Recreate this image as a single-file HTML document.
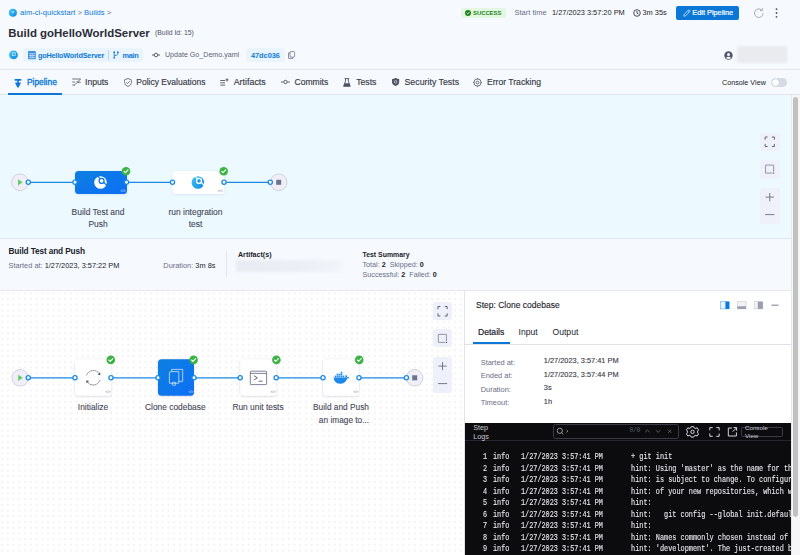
<!DOCTYPE html>
<html><head><meta charset="utf-8">
<style>
*{box-sizing:border-box;margin:0;padding:0}
html,body{width:800px;height:555px;overflow:hidden}
body{position:relative;background:#f6fafe;font-family:"Liberation Sans",sans-serif;color:#22222a}
.a{position:absolute;white-space:nowrap}
.t{position:absolute;white-space:nowrap;line-height:1}
svg{position:absolute;overflow:visible}
</style></head><body>

<!-- ===== HEADER ===== -->
<svg style="left:0;top:0" width="800" height="95">
  <defs>
    <linearGradient id="gb" x1="0" y1="0" x2="1" y2="1"><stop offset="0" stop-color="#45c8f5"/><stop offset="1" stop-color="#0a86e4"/></linearGradient>
  </defs>
  <circle cx="12.9" cy="12.85" r="4" fill="url(#gb)"/><path d="M12.1 11V12.6Q12.9 13.6 13.7 12.6V11" fill="none" stroke="#d6f1fc" stroke-width="0.7"/>
  <circle cx="13.5" cy="54.9" r="4.4" fill="url(#gb)"/><rect x="12.6" y="52.8" width="2.6" height="2.6" fill="none" stroke="#d6f1fc" stroke-width="0.7"/>
  <line x1="0" y1="69.5" x2="800" y2="69.5" stroke="#e3e3eb" stroke-width="1"/>
  <line x1="0" y1="94.5" x2="800" y2="94.5" stroke="#e3e3eb" stroke-width="1"/>
  <rect x="8" y="93" width="54" height="2" fill="#0b78d8"/>
</svg>

<div class="t" style="left:20px;top:9px;font-size:7.6px;color:#0b78d8">aim-ci-quickstart <span style="color:#6b6d85">&gt;</span> Builds <span style="color:#6b6d85">&gt;</span></div>
<div class="t" style="left:8.3px;top:27.8px;font-size:11.45px;font-weight:bold;color:#2c2d37">Build goHelloWorldServer</div>
<div class="t" style="left:155px;top:30px;font-size:6.85px;color:#4f5162">(Build Id: 15)</div>

<!-- row2 -->
<div class="a" style="left:23px;top:48px;width:119.5px;height:13.5px;border-radius:4px;background:#eaf4fd"></div>
<svg style="left:27.8px;top:50.5px" width="8" height="8.5" viewBox="0 0 8 8.5">
  <rect x="0" y="0" width="7.8" height="8.3" rx="1" fill="#3f8fdc"/>
  <path d="M0.8 2.6H7M0.8 4.5H7M0.8 6.4H7" stroke="#eaf4fd" stroke-width="0.55"/>
  <path d="M2.9 2.6V7.6M4.9 2.6V7.6" stroke="#eaf4fd" stroke-width="0.55"/>
</svg>
<div class="t" style="left:38px;top:52px;font-size:7.3px;font-weight:bold;color:#0b78d8;letter-spacing:-0.22px">goHelloWorldServer</div>
<div class="a" style="left:108.3px;top:50px;width:0.8px;height:9.5px;background:#b9d7f1"></div>
<svg style="left:112.6px;top:51px" width="6" height="8" viewBox="0 0 6 8">
  <circle cx="1.2" cy="1.2" r="0.85" fill="#0b78d8"/>
  <circle cx="1.2" cy="6.8" r="0.85" fill="#0b78d8"/>
  <circle cx="4.8" cy="1.2" r="0.85" fill="#0b78d8"/>
  <path d="M1.2 1.5V6.5M4.8 1.5V2.8Q4.8 4.4 1.2 4.9" fill="none" stroke="#0b78d8" stroke-width="0.8"/>
</svg>
<div class="t" style="left:122.5px;top:52px;font-size:7.3px;font-weight:bold;color:#0b78d8;letter-spacing:-0.25px">main</div>
<svg style="left:151px;top:50.8px" width="10" height="8" viewBox="0 0 10 8">
  <circle cx="5" cy="4" r="1.8" fill="none" stroke="#3c3d4a" stroke-width="0.8"/>
  <line x1="1" y1="4" x2="3.2" y2="4" stroke="#3c3d4a" stroke-width="0.8"/>
  <line x1="6.8" y1="4" x2="9" y2="4" stroke="#3c3d4a" stroke-width="0.8"/>
</svg>
<div class="t" style="left:165px;top:52px;font-size:7.1px;color:#5e6072">Update Go_Demo.yaml</div>
<div class="a" style="left:246px;top:48px;width:39px;height:13.5px;border-radius:4px;background:#eaf4fd"></div>
<div class="t" style="left:251px;top:52px;font-size:7.4px;font-weight:bold;color:#0b78d8;letter-spacing:-0.05px">47dc036</div>
<svg style="left:288.2px;top:51.2px" width="7" height="8" viewBox="0 0 7 8">
  <rect x="2" y="0.5" width="4.6" height="5.6" rx="0.9" fill="none" stroke="#6b6d85" stroke-width="0.75"/>
  <path d="M1.9 1.8H0.5V7.4H5V6.2" fill="none" stroke="#6b6d85" stroke-width="0.75"/>
</svg>

<!-- right header -->
<div class="a" style="left:461px;top:8px;width:45px;height:10px;border-radius:2px;background:#e4f7e1"></div>
<svg style="left:465px;top:10px" width="6" height="6" viewBox="0 0 6 6">
  <circle cx="3" cy="3" r="3" fill="#1b841d"/>
  <path d="M1.6 3.1L2.6 4L4.4 2.1" fill="none" stroke="#fff" stroke-width="0.8"/>
</svg>
<div class="t" style="left:473px;top:10.5px;font-size:5.95px;font-weight:bold;color:#1b841d;letter-spacing:-0.05px">SUCCESS</div>
<div class="t" style="left:514.5px;top:9px;font-size:7.5px;color:#6b6d85">Start time</div>
<div class="t" style="left:552px;top:9px;font-size:7.4px;color:#22222a">1/27/2023 3:57:20 PM</div>
<svg style="left:633px;top:8.5px" width="8" height="8" viewBox="0 0 8 8">
  <circle cx="4" cy="4" r="3.3" fill="none" stroke="#383946" stroke-width="0.9"/>
  <path d="M4 2V4.2L5.5 5" fill="none" stroke="#383946" stroke-width="0.9"/>
</svg>
<div class="t" style="left:642.5px;top:9px;font-size:7.4px;color:#22222a">3m 35s</div>
<div class="a" style="left:676px;top:6px;width:63px;height:13.5px;border-radius:2px;background:#0b78d8"></div>
<svg style="left:682.8px;top:8.8px" width="8" height="8" viewBox="0 0 8 8">
  <path d="M0.8 7.2L1.1 5.5L5.4 1.2Q6 0.6 6.6 1.2L6.8 1.4Q7.4 2 6.8 2.6L2.5 6.9Z M4.6 2L6 3.4" fill="none" stroke="#e6f1fc" stroke-width="0.75"/>
</svg>
<div class="t" style="left:692.3px;top:9.4px;font-size:7.35px;color:#fff;-webkit-text-stroke:0.2px #fff">Edit Pipeline</div>
<svg style="left:753.5px;top:7.5px" width="10" height="10" viewBox="0 0 10 10">
  <path d="M9.1 5.3A4.3 4.3 0 1 1 7.6 1.9" fill="none" stroke="#9fa1b3" stroke-width="0.9"/>
  <path d="M8.4 0.2V2.6H6" fill="none" stroke="#9fa1b3" stroke-width="0.9"/>
</svg>
<svg style="left:775px;top:7.5px" width="3" height="10" viewBox="0 0 3 10">
  <circle cx="1.5" cy="1.2" r="0.9" fill="#4f5162"/><circle cx="1.5" cy="5" r="0.9" fill="#4f5162"/><circle cx="1.5" cy="8.8" r="0.9" fill="#4f5162"/>
</svg>
<svg style="left:724px;top:50.7px" width="9" height="9" viewBox="0 0 9 9">
  <circle cx="4.5" cy="4.5" r="4.2" fill="#545668"/>
  <circle cx="4.5" cy="3.4" r="1.5" fill="#f6f9fd"/>
  <path d="M1.9 7.1Q4.5 4.2 7.1 7.1Q4.5 9 1.9 7.1Z" fill="#f6f9fd"/>
</svg>
<div class="a" style="left:737px;top:46px;width:50px;height:17px;background:#e9ebef;filter:blur(1px)"></div>

<!-- ===== TABS ===== -->
<svg style="left:13.5px;top:77.5px" width="8" height="10" viewBox="0 0 8 10">
  <rect x="0.4" y="0.9" width="7.2" height="1.8" rx="0.9" fill="#0b78d8"/>
  <rect x="3.2" y="0.9" width="1.6" height="8.6" fill="#0b78d8"/>
  <path d="M1.2 4.4H6.8Q7 6.8 4 7.2Q1 6.8 1.2 4.4Z" fill="#0b78d8"/>
  <circle cx="4" cy="7.3" r="1.6" fill="#0b78d8"/>
</svg>
<div class="t" style="left:27px;top:78.3px;font-size:8.4px;color:#0b78d8;-webkit-text-stroke:0.35px #0b78d8">Pipeline</div>

<svg style="left:71.5px;top:78px" width="9" height="8" viewBox="0 0 9 8">
  <path d="M0.3 1H8.7M0.3 4H3M0.3 7H2.5" stroke="#4f5162" stroke-width="0.8" fill="none"/>
  <path d="M2 7.5L8.5 1.2M4.8 3.2L6.8 5.2M6 4.2L8.7 4.2" stroke="#4f5162" stroke-width="0.8" fill="none"/>
</svg>
<div class="t" style="left:85px;top:78.3px;font-size:8.6px;color:#383946;-webkit-text-stroke:0.15px #383946">Inputs</div>

<svg style="left:123.5px;top:77.5px" width="8" height="9" viewBox="0 0 8 9">
  <path d="M4 0.5L7.4 1.8V4.6Q7.4 7.4 4 8.5Q0.6 7.4 0.6 4.6V1.8Z" fill="none" stroke="#5e6072" stroke-width="0.8"/>
  <path d="M2.4 4.4L3.6 5.5L5.8 3.1" fill="none" stroke="#5e6072" stroke-width="0.8"/>
</svg>
<div class="t" style="left:136.2px;top:78.3px;font-size:8.55px;color:#383946;-webkit-text-stroke:0.15px #383946">Policy Evaluations</div>

<svg style="left:219.5px;top:77.5px" width="9" height="8" viewBox="0 0 9 8">
  <path d="M0.3 2.5H5M0.3 4.8H5M0.3 7.1H5" stroke="#4f5162" stroke-width="0.9" fill="none"/>
  <path d="M7 0.3V3.5M5.4 1.9H8.6" stroke="#4f5162" stroke-width="0.9" fill="none"/>
</svg>
<div class="t" style="left:233.7px;top:78.3px;font-size:8.9px;color:#383946;-webkit-text-stroke:0.15px #383946">Artifacts</div>

<svg style="left:280.5px;top:79px" width="9" height="6" viewBox="0 0 9 6">
  <circle cx="4.5" cy="3" r="1.7" fill="none" stroke="#4f5162" stroke-width="0.9"/>
  <path d="M0 3H2.6M6.4 3H9" stroke="#4f5162" stroke-width="0.9"/>
</svg>
<div class="t" style="left:294.5px;top:78.3px;font-size:8.55px;color:#383946;-webkit-text-stroke:0.15px #383946">Commits</div>

<svg style="left:343.3px;top:77.8px" width="8" height="9" viewBox="0 0 8 9">
  <path d="M1.6 0.6H6.2M2.5 0.6V3.2L0.6 8.3H7.2L5.3 3.2V0.6" fill="none" stroke="#4f5162" stroke-width="0.9" stroke-linejoin="round"/>
  <path d="M1.6 5.2H6.2L7.2 8.3H0.6Z" fill="#4f5162"/>
</svg>
<div class="t" style="left:356.2px;top:78.3px;font-size:8.7px;color:#383946;-webkit-text-stroke:0.15px #383946">Tests</div>

<svg style="left:391.8px;top:78.2px" width="7.2" height="8" viewBox="0 0 7.2 8">
  <path d="M3.6 0L7.2 1.3V3.9Q7.2 6.7 3.6 8Q0 6.7 0 3.9V1.3Z" fill="#4f5162"/>
  <circle cx="3.6" cy="3.8" r="1.3" fill="none" stroke="#f6f9fd" stroke-width="0.6"/>
</svg>
<div class="t" style="left:404.5px;top:78.3px;font-size:8.8px;color:#383946;-webkit-text-stroke:0.15px #383946">Security Tests</div>

<svg style="left:473px;top:77.5px" width="9" height="9" viewBox="0 0 9 9">
  <circle cx="4.5" cy="4.5" r="3.6" fill="none" stroke="#4f5162" stroke-width="0.8"/>
  <circle cx="4.5" cy="4.5" r="1.4" fill="none" stroke="#4f5162" stroke-width="0.8"/>
  <path d="M4.5 0V1.2M4.5 7.8V9M0 4.5H1.2M7.8 4.5H9" stroke="#4f5162" stroke-width="0.8"/>
</svg>
<div class="t" style="left:487px;top:78.3px;font-size:8.6px;color:#383946;-webkit-text-stroke:0.15px #383946">Error Tracking</div>

<div class="t" style="left:722px;top:78.5px;font-size:7.2px;color:#22222a">Console View</div>
<div class="a" style="left:771px;top:78px;width:16px;height:9px;border-radius:5px;background:#d4dbe3"></div>
<div class="a" style="left:771.8px;top:78.8px;width:7.4px;height:7.4px;border-radius:50%;background:#fff;box-shadow:0 0 0.6px rgba(0,0,0,0.4)"></div>

<!-- ===== CANVAS ===== -->
<div class="a" style="left:0;top:95px;width:792px;height:143px;background:#ecf9ff"></div>
<div class="a" style="left:0;top:238px;width:792px;height:53px;background:#f6faff;border-top:1px solid #e1e5ec;border-bottom:1px solid #e6e6ee"></div>
<svg style="left:0;top:95px" width="792" height="143" viewBox="0 95 792 143">
  <defs>
    <linearGradient id="bl" x1="0" y1="0" x2="1" y2="1"><stop offset="0" stop-color="#0b7fe0"/><stop offset="1" stop-color="#0a6ff5"/></linearGradient>
    <filter id="sh" x="-20%" y="-20%" width="140%" height="160%"><feDropShadow dx="0" dy="0.6" stdDeviation="0.8" flood-color="#6080a0" flood-opacity="0.18"/></filter>
    <linearGradient id="gic" x1="0" y1="0" x2="1" y2="1"><stop offset="0" stop-color="#45c8f5"/><stop offset="1" stop-color="#0a86e4"/></linearGradient>
  </defs>
  <line x1="28" y1="182.3" x2="75" y2="182.3" stroke="#1a8ae6" stroke-width="1.3"/>
  <line x1="127" y1="182.3" x2="172.5" y2="182.3" stroke="#1a8ae6" stroke-width="1.3"/>
  <line x1="224" y1="182.3" x2="270" y2="182.3" stroke="#1a8ae6" stroke-width="1.3"/>
  <circle cx="20" cy="182.3" r="8.3" fill="#f0eff8" stroke="#c9c9da" stroke-width="0.8"/>
  <path d="M18 179.2L22.6 182.3L18 185.4Z" fill="#5fcd68"/>
  <circle cx="278.7" cy="182.3" r="8.3" fill="#f0eff8" stroke="#c9c9da" stroke-width="0.8"/>
  <rect x="276.2" y="179.8" width="5" height="5" fill="#6f7190"/>
  <rect x="75" y="171" width="52" height="23" rx="3.5" fill="url(#bl)" filter="url(#sh)"/>
  <rect x="172.5" y="171" width="51.5" height="23" rx="3.5" fill="#fff" filter="url(#sh)"/>
  <circle cx="28.3" cy="182.3" r="2.1" fill="#fff" stroke="#1a8ae6" stroke-width="1.3"/>
  <circle cx="75" cy="182.3" r="2.1" fill="#fff" stroke="#1a8ae6" stroke-width="1.3"/>
  <circle cx="126.5" cy="182.3" r="2.1" fill="#fff" stroke="#1a8ae6" stroke-width="1.3"/>
  <circle cx="172.5" cy="182.3" r="2.1" fill="#fff" stroke="#1a8ae6" stroke-width="1.3"/>
  <circle cx="224" cy="182.3" r="2.1" fill="#fff" stroke="#1a8ae6" stroke-width="1.3"/>
  <circle cx="270.3" cy="182.3" r="2.1" fill="#fff" stroke="#1a8ae6" stroke-width="1.3"/>
  <!-- stage icon 1 (white) -->
  <circle cx="100.5" cy="182.5" r="6.3" fill="#fff"/>
  <path d="M97.6 176.2L106.9 185.5" stroke="#0b7ae8" stroke-width="1.1"/>
  <circle cx="101.6" cy="180.9" r="2.45" fill="#fff" stroke="#0b7ae8" stroke-width="1.3"/>
  <!-- stage icon 2 (blue) -->
  <circle cx="197.9" cy="182.5" r="6.3" fill="url(#gic)"/>
  <path d="M195 176.2L204.3 185.5" stroke="#fff" stroke-width="1.1"/>
  <circle cx="199" cy="180.9" r="2.45" fill="#2a98e8" stroke="#fff" stroke-width="1.3"/>
  <!-- code marks -->
  <text x="120.6" y="191.6" font-size="3.4" fill="#e6f1fd" font-family="Liberation Sans">&lt;/&gt;</text>
  <text x="217.8" y="191.6" font-size="3.4" fill="#6b6d85" font-family="Liberation Sans">&lt;/&gt;</text>
  <!-- checks -->
  <circle cx="126" cy="171.2" r="4.3" fill="#3bb443"/>
  <path d="M124 171.3L125.4 172.6L128 169.9" fill="none" stroke="#fff" stroke-width="1.1" stroke-linecap="round" stroke-linejoin="round"/>
  <circle cx="223.7" cy="171.2" r="4.3" fill="#3bb443"/>
  <path d="M221.7 171.3L223.1 172.6L225.7 169.9" fill="none" stroke="#fff" stroke-width="1.1" stroke-linecap="round" stroke-linejoin="round"/>
</svg>
<div class="t" style="left:48px;top:205.5px;width:100px;text-align:center;font-size:8.45px;line-height:12.2px;color:#464858;-webkit-text-stroke:0.1px #464858;white-space:normal">Build Test and<br>Push</div>
<div class="t" style="left:145.5px;top:205.5px;width:100px;text-align:center;font-size:8.45px;line-height:12.2px;color:#464858;-webkit-text-stroke:0.1px #464858;white-space:normal">run integration<br>test</div>

<!-- canvas controls -->
<div class="a" style="left:760px;top:132.5px;width:19.5px;height:18.5px;border-radius:3px;background:#eef0fa"></div>
<div class="a" style="left:760px;top:160px;width:19.5px;height:18.5px;border-radius:3px;background:#eef0fa"></div>
<div class="a" style="left:760px;top:188px;width:19.5px;height:35.5px;border-radius:3px;background:#eef0fa"></div>
<svg style="left:0;top:0" width="800" height="555" viewBox="0 0 800 555">
  <g fill="none" stroke="#4f5162" stroke-width="0.9">
    <path d="M765.15 139.7V137.0H767.55M771.95 137.0H774.35V139.6M774.35 143.9V146.5H771.95M767.55 146.5H765.15V143.9"/>
    <path d="M773.65 171.8V165.1H765.55V173.1H772.35" stroke="#8a8ca0"/>
  </g>
  <circle cx="773.65" cy="173.1" r="0.7" fill="#4f5162"/>
  <path d="M769.75 193V201.2M765.65 197.1H773.85M765.15 214.6H774.35" stroke="#6b6d85" stroke-width="0.9"/>
</svg>

<!-- ===== STAGE DETAILS ===== -->
<div class="t" style="left:8.5px;top:248.2px;font-size:8.25px;font-weight:bold;color:#22222a;letter-spacing:-0.12px">Build Test and Push</div>
<div class="t" style="left:8.5px;top:262px;font-size:7.4px;color:#6b6d85">Started at: <span style="color:#22222a">1/27/2023, 3:57:22 PM</span></div>
<div class="t" style="left:163.3px;top:262px;font-size:7.4px;color:#6b6d85">Duration: <span style="color:#22222a">3m 8s</span></div>
<div class="a" style="left:226px;top:251px;width:1px;height:26px;background:#e3e4ec"></div>
<div class="t" style="left:238px;top:251.8px;font-size:7.1px;font-weight:bold;color:#22222a">Artifact(s)</div>
<div class="a" style="left:236px;top:259.5px;width:106px;height:12px;background:linear-gradient(90deg,#e8ebf1,#ebeef4 60%,#f1f4f9);filter:blur(1.5px)"></div>
<div class="t" style="left:362.5px;top:251.8px;font-size:6.9px;font-weight:bold;color:#22222a">Test Summary</div>
<div class="t" style="left:362.5px;top:260.7px;font-size:7.2px;color:#6b6d85">Total: <b style="color:#22222a">2</b>&nbsp;&nbsp;Skipped: <b style="color:#22222a">0</b></div>
<div class="t" style="left:362.5px;top:270.7px;font-size:7.2px;color:#6b6d85">Successful: <b style="color:#22222a">2</b>&nbsp;&nbsp;Failed: <b style="color:#22222a">0</b></div>

<!-- ===== LOWER GRAPH ===== -->
<div class="a" style="left:0;top:291px;width:464px;height:264px;background-color:#fff;background-image:radial-gradient(circle,#d6d6da 0.5px,transparent 0.75px);background-size:5.74px 5.72px;background-position:-0.75px -0.7px"></div>
<svg style="left:0;top:291px" width="464" height="264" viewBox="0 291 464 264">
  <defs>
    <linearGradient id="bl2" x1="0" y1="0" x2="1" y2="1"><stop offset="0" stop-color="#0b7fe0"/><stop offset="1" stop-color="#0a6ff5"/></linearGradient>
    <filter id="sh2" x="-30%" y="-30%" width="160%" height="160%"><feDropShadow dx="0" dy="0.5" stdDeviation="0.8" flood-color="#506080" flood-opacity="0.28"/></filter>
    <linearGradient id="dk" x1="0" y1="0" x2="0" y2="1"><stop offset="0" stop-color="#2a8ef0"/><stop offset="1" stop-color="#0b6fd6"/></linearGradient>
  </defs>
  <line x1="28" y1="377.8" x2="75" y2="377.8" stroke="#1a8ae6" stroke-width="1.3"/>
  <line x1="111" y1="377.8" x2="158" y2="377.8" stroke="#1a8ae6" stroke-width="1.3"/>
  <line x1="194" y1="377.8" x2="240.2" y2="377.8" stroke="#1a8ae6" stroke-width="1.3"/>
  <line x1="276.2" y1="377.8" x2="323" y2="377.8" stroke="#1a8ae6" stroke-width="1.3"/>
  <line x1="359" y1="377.8" x2="406.4" y2="377.8" stroke="#1a8ae6" stroke-width="1.3"/>
  <circle cx="20.2" cy="377.8" r="8.3" fill="#f0eff8" stroke="#c9c9da" stroke-width="0.8"/>
  <path d="M18.2 374.7L22.8 377.8L18.2 380.9Z" fill="#5fcd68"/>
  <circle cx="414.7" cy="377.8" r="8.3" fill="#f0eff8" stroke="#c9c9da" stroke-width="0.8"/>
  <rect x="412.2" y="375.3" width="5" height="5" fill="#6f7190"/>
  <rect x="75" y="359.3" width="36.2" height="36.4" rx="3.5" fill="#fff" filter="url(#sh2)"/>
  <rect x="158" y="359.3" width="36" height="36.4" rx="3.5" fill="url(#bl2)" filter="url(#sh2)"/>
  <rect x="240.2" y="359.3" width="36" height="36.4" rx="3.5" fill="#fff" filter="url(#sh2)"/>
  <rect x="323" y="359.3" width="36" height="36.4" rx="3.5" fill="#fff" filter="url(#sh2)"/>
  <circle cx="28.3" cy="377.8" r="2.1" fill="#fff" stroke="#1a8ae6" stroke-width="1.3"/>
  <circle cx="75" cy="377.8" r="2.1" fill="#fff" stroke="#1a8ae6" stroke-width="1.3"/>
  <circle cx="111" cy="377.8" r="2.1" fill="#fff" stroke="#1a8ae6" stroke-width="1.3"/>
  <circle cx="158" cy="377.8" r="2.1" fill="#fff" stroke="#1a8ae6" stroke-width="1.3"/>
  <circle cx="194" cy="377.8" r="2.1" fill="#fff" stroke="#1a8ae6" stroke-width="1.3"/>
  <circle cx="240.2" cy="377.8" r="2.1" fill="#fff" stroke="#1a8ae6" stroke-width="1.3"/>
  <circle cx="276.2" cy="377.8" r="2.1" fill="#fff" stroke="#1a8ae6" stroke-width="1.3"/>
  <circle cx="323" cy="377.8" r="2.1" fill="#fff" stroke="#1a8ae6" stroke-width="1.3"/>
  <circle cx="359" cy="377.8" r="2.1" fill="#fff" stroke="#1a8ae6" stroke-width="1.3"/>
  <circle cx="406.4" cy="377.8" r="2.1" fill="#fff" stroke="#1a8ae6" stroke-width="1.3"/>
  <!-- initialize icon -->
  <g fill="none" stroke="#55576a" stroke-width="0.75">
    <path d="M99.6 374.2A7.1 7.1 0 0 0 86.6 375.4" stroke-dasharray="1.7 0.45"/>
    <path d="M87 381.4A7.1 7.1 0 0 0 100 380" stroke-dasharray="1.7 0.45"/>
  </g>
  <path d="M100.2 372.2L100.3 375.3L97.5 374.6Z" fill="#55576a"/>
  <path d="M86.4 383.3L86.3 380.2L89.1 380.9Z" fill="#55576a"/>
  <!-- clone icon -->
  <g fill="none" stroke="#dcebfd" stroke-width="0.75">
    <path d="M169.4 383.2V373.2Q169.4 371.6 171 371.6H178.8V383.2Z"/>
    <path d="M171.6 371.6V369.4H182.7V381.4H178.8"/>
    <rect x="172.4" y="382.3" width="3.2" height="3" rx="0.6"/>
  </g>
  <text x="188.5" y="392.8" font-size="3.4" fill="#e6f1fd" font-family="Liberation Sans">&lt;/&gt;</text>
  <!-- terminal icon -->
  <g fill="none" stroke="#6b6d85" stroke-width="0.85">
    <rect x="250.3" y="371.2" width="16.3" height="13.4" rx="0.7"/>
    <path d="M250.3 373.4H266.6"/>
  </g>
  <path d="M253.8 375.6L257.4 377.8L253.8 380M258.6 381.2H262.6" fill="none" stroke="#55576a" stroke-width="0.9"/>
  <!-- docker -->
  <g fill="#1e88ea">
    <path d="M333.5 377.6H346.3Q347.6 376.4 349.5 377.2Q348.7 378.5 347.3 378.5Q345.2 383.9 339.8 383.8Q334.2 383.6 333.5 377.6Z"/>
    <path d="M345.4 377.7L345.6 374.7Q347.2 375.3 347.2 377Z"/>
    <rect x="334.7" y="375.6" width="1.6" height="1.7"/><rect x="336.7" y="375.6" width="1.6" height="1.7"/><rect x="338.7" y="375.6" width="1.6" height="1.7"/><rect x="340.7" y="375.6" width="1.6" height="1.7"/><rect x="342.7" y="375.6" width="1.6" height="1.7"/>
    <rect x="336.7" y="373.7" width="1.6" height="1.7"/><rect x="338.7" y="373.7" width="1.6" height="1.7"/><rect x="340.7" y="373.7" width="1.6" height="1.7"/>
    <rect x="340.7" y="371.8" width="1.6" height="1.7"/>
  </g>
  <text x="105.5" y="392.8" font-size="3.4" fill="#6b6d85" font-family="Liberation Sans">&lt;/&gt;</text>
  
  <text x="270.6" y="392.8" font-size="3.4" fill="#6b6d85" font-family="Liberation Sans">&lt;/&gt;</text>
  <text x="353.4" y="392.8" font-size="3.4" fill="#6b6d85" font-family="Liberation Sans">&lt;/&gt;</text>
  <circle cx="110.8" cy="359.9" r="4.3" fill="#3bb443"/>
  <path d="M108.8 360L110.2 361.3L112.8 358.6" fill="none" stroke="#fff" stroke-width="1.1" stroke-linecap="round" stroke-linejoin="round"/>
  <circle cx="193.6" cy="359.9" r="4.3" fill="#3bb443"/>
  <path d="M191.6 360L193 361.3L195.6 358.6" fill="none" stroke="#fff" stroke-width="1.1" stroke-linecap="round" stroke-linejoin="round"/>
  <circle cx="276.4" cy="359.9" r="4.3" fill="#3bb443"/>
  <path d="M274.4 360L275.8 361.3L278.4 358.6" fill="none" stroke="#fff" stroke-width="1.1" stroke-linecap="round" stroke-linejoin="round"/>
  <circle cx="359.2" cy="359.9" r="4.3" fill="#3bb443"/>
  <path d="M357.2 360L358.6 361.3L361.2 358.6" fill="none" stroke="#fff" stroke-width="1.1" stroke-linecap="round" stroke-linejoin="round"/>
</svg>
<div class="t" style="left:43px;top:402.5px;width:100px;text-align:center;font-size:8.4px;color:#464858;-webkit-text-stroke:0.1px #464858">Initialize</div>
<div class="t" style="left:125.3px;top:402.5px;width:100px;text-align:center;font-size:8.4px;color:#464858;-webkit-text-stroke:0.1px #464858">Clone codebase</div>
<div class="t" style="left:208px;top:402.5px;width:100px;text-align:center;font-size:8.4px;color:#464858;-webkit-text-stroke:0.1px #464858">Run unit tests</div>
<div class="t" style="left:291px;top:401.3px;width:100px;text-align:center;font-size:8.3px;line-height:12.2px;color:#464858;-webkit-text-stroke:0.1px #464858">Build and Push</div>
<div class="t" style="left:294px;top:413.5px;width:100px;text-align:center;font-size:8.3px;line-height:12.2px;color:#464858;-webkit-text-stroke:0.1px #464858">an image to...</div>

<div class="a" style="left:433px;top:302px;width:19px;height:18px;border-radius:3px;background:#eef0fa"></div>
<div class="a" style="left:433px;top:329.3px;width:19px;height:18px;border-radius:3px;background:#eef0fa"></div>
<div class="a" style="left:433px;top:357px;width:19px;height:36px;border-radius:3px;background:#eef0fa"></div>
<svg style="left:0;top:0" width="800" height="555" viewBox="0 0 800 555">
  <g fill="none" stroke="#4f5162" stroke-width="0.9">
    <path d="M437.95 309.2V306.5H440.35M444.75 306.5H447.15000000000003V309.1M447.15000000000003 313.4V316H444.75M440.35 316H437.95V313.4"/>
    <path d="M446.45 341.1V334.40000000000003H438.35V342.40000000000003H445.15000000000003" stroke="#8a8ca0"/>
  </g>
  <circle cx="446.45" cy="342.40000000000003" r="0.7" fill="#4f5162"/>
  <path d="M442.55 362V370.2M438.45 366.1H446.65000000000003M437.95 383.6H447.15000000000003" stroke="#6b6d85" stroke-width="0.9"/>
</svg>

<!-- ===== RIGHT PANEL ===== -->
<div class="a" style="left:463.5px;top:291px;width:328px;height:264px;background:#fff;border-left:1px solid #e2e3ea"></div>
<div class="t" style="left:476px;top:300.5px;font-size:8.5px;color:#22222a;-webkit-text-stroke:0.12px #22222a">Step: Clone codebase</div>
<svg style="left:720px;top:300.5px" width="60" height="9" viewBox="720 300.5 60 9">
  <rect x="720.6" y="301.2" width="8.6" height="7.2" fill="#eaf4fd" stroke="#5aa8ef" stroke-width="0.6"/>
  <rect x="725.4" y="301.2" width="3.8" height="7.2" fill="#0b78d8"/>
  <rect x="737.4" y="301.2" width="8.6" height="7.2" fill="#f3f3f8" stroke="#c6c7d4" stroke-width="0.6"/>
  <rect x="737.4" y="305.8" width="8.6" height="2.6" fill="#9a9cb0"/>
  <rect x="754.2" y="301.2" width="8.6" height="7.2" fill="#f3f3f8" stroke="#c6c7d4" stroke-width="0.6"/>
  <rect x="757.8" y="301.2" width="5" height="7.2" fill="#9a9cb0"/>
  <rect x="771.5" y="304.2" width="7" height="0.9" fill="#6b6d85"/>
</svg>
<div class="t" style="left:478px;top:327.5px;font-size:8.6px;color:#22222a;-webkit-text-stroke:0.2px #22222a">Details</div>
<div class="t" style="left:518.5px;top:327.5px;font-size:8.6px;color:#22222a">Input</div>
<div class="t" style="left:552.5px;top:327.5px;font-size:8.6px;color:#22222a">Output</div>
<div class="a" style="left:464px;top:343.8px;width:327px;height:1px;background:#dfe0e8"></div>
<div class="a" style="left:473px;top:342.3px;width:37px;height:1.6px;background:#0b78d8"></div>

<div class="t" style="left:480.7px;top:355.6px;font-size:7.45px;line-height:13.6px;color:#6b6d85;white-space:pre">Started at:
Ended at:
Duration:
Timeout:</div>
<div class="t" style="left:543.8px;top:354.3px;font-size:7.4px;line-height:13.6px;color:#383946;-webkit-text-stroke:0.12px #383946;white-space:pre">1/27/2023, 3:57:41 PM
1/27/2023, 3:57:44 PM
3s
1h</div>

<!-- ===== LOGS ===== -->
<div class="a" style="left:464.5px;top:423px;width:326.5px;height:132px;background:#0c0c0e"></div>
<div class="a" style="left:464.5px;top:439.5px;width:326.5px;height:0.8px;background:#26262e"></div>
<div class="t" style="left:473.2px;top:423.3px;font-size:7.2px;line-height:9px;color:#c9cad6;white-space:pre">Step
Logs</div>
<div class="a" style="left:552.6px;top:424.3px;width:126.4px;height:14.5px;border-radius:2.5px;border:0.9px solid #3b3c46"></div>
<svg style="left:556px;top:427px" width="124" height="9" viewBox="556 427 124 9">
  <g fill="none" stroke="#b7b8c6" stroke-width="0.8">
    <circle cx="559.8" cy="430.8" r="2.6"/><path d="M561.7 432.7L563.3 434.3"/>
    <path d="M566.6 430L567.8 431.2L566.6 432.4"/>
    <path d="M645.2 432.2L647.4 430L649.6 432.2M656 430.2L658.2 432.4L660.4 430.2M668.2 429.8L671.2 432.8M671.2 429.8L668.2 432.8" stroke="#6e7080"/>
  </g>
</svg>
<div class="t" style="left:629.5px;top:428.3px;font-size:6.3px;color:#5e6070;font-family:'Liberation Mono',monospace;letter-spacing:-0.3px">0/0</div>
<svg style="left:686px;top:425px" width="52" height="14" viewBox="686 425 52 14">
  <g fill="none" stroke="#d4d5de" stroke-width="1">
    <path d="M691.2 426.7H693.8L694.4 428.1L695.9 428.5L697.1 427.7L698.6 429.9L697.6 431L697.6 432.8L698.6 433.9L697.1 436.1L695.9 435.3L694.4 435.7L693.8 437.1H691.2L690.6 435.7L689.1 435.3L687.9 436.1L686.4 433.9L687.4 432.8L687.4 431L686.4 429.9L687.9 427.7L689.1 428.5L690.6 428.1Z" stroke-linejoin="round"/>
    <circle cx="692.5" cy="431.9" r="1.7"/>
    <path d="M709.8 430V427.6H712.3M716.7 427.6H719.2V430M719.2 433.9V436.3H716.7M712.3 436.3H709.8V433.9" stroke-linecap="round"/>
    <path d="M731.6 428H728.3V436H736.4V432.8M733 431.4L736.3 428.1M733.9 427.6H736.6V430.3" stroke-linecap="round"/>
  </g>
</svg>
<div class="a" style="left:741.2px;top:426.7px;width:41.5px;height:10px;border:0.8px solid #3b3c46;border-radius:1.5px"></div>
<div class="t" style="left:745px;top:424.3px;font-size:6.2px;line-height:7.5px;color:#c9cad6;white-space:pre">Console
View</div>

<div class="a" style="left:464.5px;top:451px;width:326.5px;height:104px;overflow:hidden">
<div class="t" style="left:18.2px;top:0;font-family:'Liberation Mono',monospace;font-size:8.2px;line-height:11.55px;color:#e6e6ec;-webkit-text-stroke:0.12px #e6e6ec;white-space:pre;transform-origin:0 0;transform:scaleX(0.834)">1
2
3
4
5
6
7
8
9</div>
<div class="t" style="left:28.7px;top:0;font-family:'Liberation Mono',monospace;font-size:8.2px;line-height:11.55px;color:#e6e6ec;-webkit-text-stroke:0.12px #e6e6ec;white-space:pre;transform-origin:0 0;transform:scaleX(0.834)">info
info
info
info
info
info
info
info
info</div>
<div class="t" style="left:56.4px;top:0;font-family:'Liberation Mono',monospace;font-size:8.2px;line-height:11.55px;color:#e6e6ec;-webkit-text-stroke:0.12px #e6e6ec;white-space:pre;transform-origin:0 0;transform:scaleX(0.834)">1/27/2023 3:57:41 PM
1/27/2023 3:57:41 PM
1/27/2023 3:57:41 PM
1/27/2023 3:57:41 PM
1/27/2023 3:57:41 PM
1/27/2023 3:57:41 PM
1/27/2023 3:57:41 PM
1/27/2023 3:57:41 PM
1/27/2023 3:57:41 PM</div>
<div class="t" style="left:166.2px;top:0;font-family:'Liberation Mono',monospace;font-size:8.2px;line-height:11.55px;color:#e6e6ec;-webkit-text-stroke:0.12px #e6e6ec;white-space:pre;transform-origin:0 0;transform:scaleX(0.841)">+ git init
hint: Using 'master' as the name for the initial branch. This default branch name
hint: is subject to change. To configure the initial branch name to use in all
hint: of your new repositories, which will suppress this warning, call:
hint:
hint:   git config --global init.defaultBranch &lt;name&gt;
hint:
hint: Names commonly chosen instead of 'master' are 'main', 'trunk' and
hint: 'development'. The just-created branch can be renamed via this command:</div>
</div>

<!-- scrollbar -->
<div class="a" style="left:791.4px;top:95px;width:8.6px;height:460px;background:#f6f6f6;border-left:0.6px solid #e8e8e8"></div>
<div class="a" style="left:793.4px;top:96.6px;width:4.8px;height:420px;border-radius:2.4px;background:#c1c1c1"></div>

</body></html>
